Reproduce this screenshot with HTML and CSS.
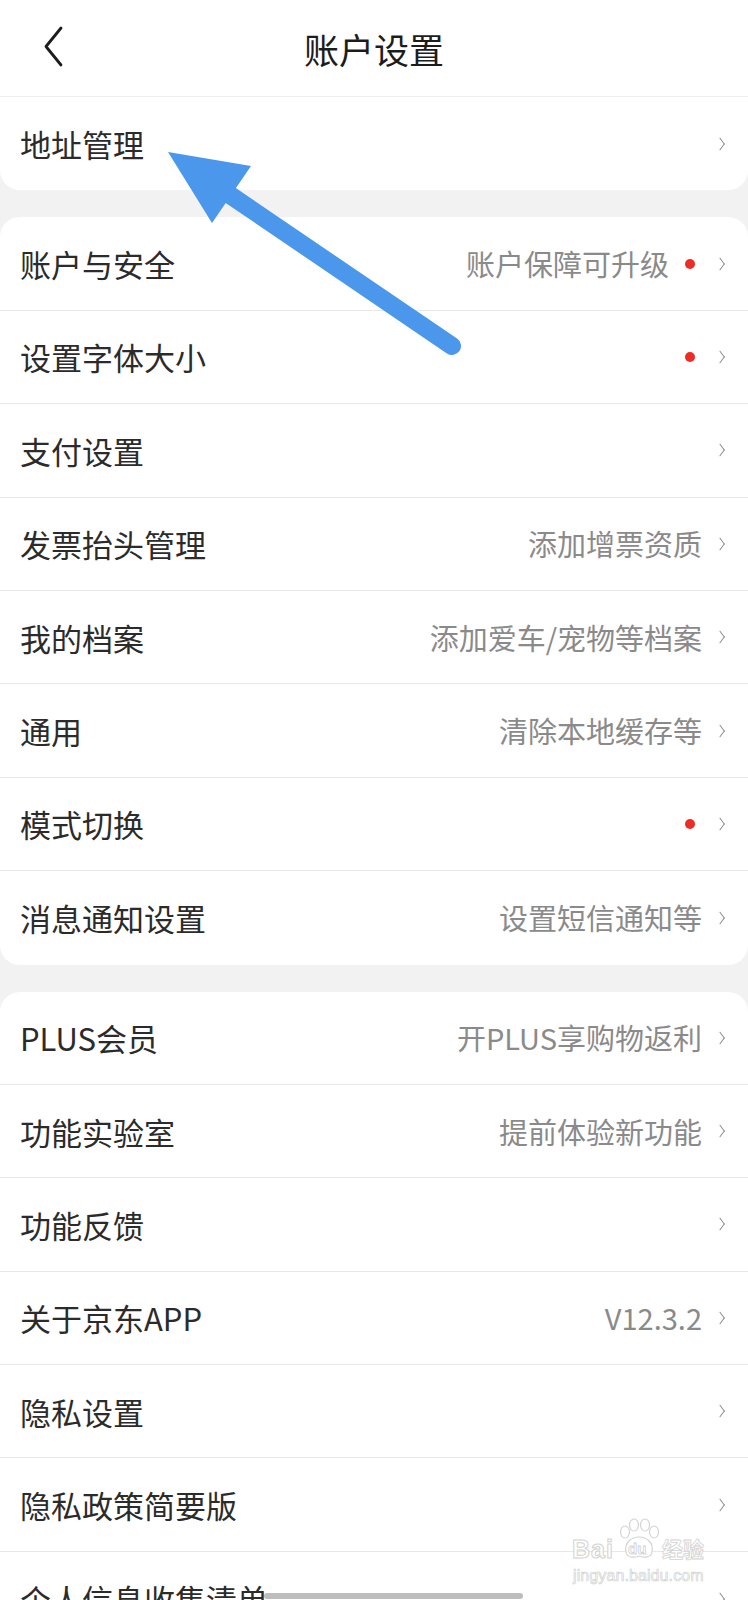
FILE: index.html
```html
<!DOCTYPE html>
<html lang="zh-CN">
<head>
    <meta charset="UTF-8">
    <meta name="viewport" content="width=device-width, initial-scale=1.0">
    <title>账户设置</title>
    <link rel="stylesheet" href="styles.css">
</head>
<body>
    <div class="page">
        <header class="topbar">
            <span class="back">
                <svg width="20" height="42" viewBox="0 0 20 42"><polyline points="17,2 2,20.5 17,39" fill="none" stroke="#1c1c1c" stroke-width="2.8" stroke-linecap="round" stroke-linejoin="round"/></svg>
            </span>
            <h1 class="title">账户设置</h1>
        </header>

        <section class="group group-first">
            <div class="row"><span class="label">地址管理</span><span class="extra"><i class="chev"></i></span></div>
        </section>

        <section class="group">
            <div class="row"><span class="label">账户与安全</span><span class="extra"><span class="value">账户保障可升级</span><i class="dot"></i><i class="chev"></i></span></div>
            <div class="row"><span class="label">设置字体大小</span><span class="extra"><i class="dot"></i><i class="chev"></i></span></div>
            <div class="row"><span class="label">支付设置</span><span class="extra"><i class="chev"></i></span></div>
            <div class="row"><span class="label">发票抬头管理</span><span class="extra"><span class="value">添加增票资质</span><i class="chev"></i></span></div>
            <div class="row"><span class="label">我的档案</span><span class="extra"><span class="value">添加爱车/宠物等档案</span><i class="chev"></i></span></div>
            <div class="row"><span class="label">通用</span><span class="extra"><span class="value">清除本地缓存等</span><i class="chev"></i></span></div>
            <div class="row"><span class="label">模式切换</span><span class="extra"><i class="dot"></i><i class="chev"></i></span></div>
            <div class="row"><span class="label">消息通知设置</span><span class="extra"><span class="value">设置短信通知等</span><i class="chev"></i></span></div>
        </section>

        <section class="group">
            <div class="row"><span class="label">PLUS会员</span><span class="extra"><span class="value">开PLUS享购物返利</span><i class="chev"></i></span></div>
            <div class="row"><span class="label">功能实验室</span><span class="extra"><span class="value">提前体验新功能</span><i class="chev"></i></span></div>
            <div class="row"><span class="label">功能反馈</span><span class="extra"><i class="chev"></i></span></div>
            <div class="row"><span class="label">关于京东APP</span><span class="extra"><span class="value">V12.3.2</span><i class="chev"></i></span></div>
            <div class="row"><span class="label">隐私设置</span><span class="extra"><i class="chev"></i></span></div>
            <div class="row"><span class="label">隐私政策简要版</span><span class="extra"><i class="chev"></i></span></div>
            <div class="row"><span class="label">个人信息收集清单</span><span class="extra"><i class="chev"></i></span></div>
        </section>

        <!-- annotation arrow drawn over the list -->
        <svg class="pointer" width="748" height="400" viewBox="0 0 748 400">
            <line x1="452" y1="346" x2="230" y2="195" stroke="#4a97ec" stroke-width="18" stroke-linecap="round"/>
            <polygon points="168,152 251,166 212,223" fill="#4a97ec"/>
        </svg>

        <div class="watermark">
            <svg class="paw" width="46" height="42" viewBox="0 0 46 42">
                <ellipse cx="9" cy="14" rx="4.5" ry="6" fill="none" stroke="#d4d4d4" stroke-width="1.2"/>
                <ellipse cx="18" cy="7" rx="4.5" ry="6" fill="none" stroke="#d4d4d4" stroke-width="1.2"/>
                <ellipse cx="29" cy="7" rx="4.5" ry="6" fill="none" stroke="#d4d4d4" stroke-width="1.2"/>
                <ellipse cx="38" cy="14" rx="4.5" ry="6" fill="none" stroke="#d4d4d4" stroke-width="1.2"/>
                <path d="M10,34 C8,24 16,19 23,19 C30,19 38,24 36,34 C35,40 28,40 23,38 C18,40 11,40 10,34 Z" fill="#fff" stroke="#d4d4d4" stroke-width="1.2"/>
            </svg>
            <span class="wm-bai">Bai</span>
            <span class="wm-du">du</span>
            <span class="wm-jy">经验</span>
            <span class="wm-url">jingyan.baidu.com</span>
        </div>

        <div class="scrollbar"></div>
    </div>
</body>
</html>
```

FILE: styles.css
```css
html, body { margin: 0; padding: 0; }
body { font-family: "Noto Sans CJK SC", "Noto Sans", sans-serif; background-color: #f2f2f2; color: #333; }
.page { position: relative; width: 748px; height: 1600px; overflow: hidden; }

.topbar { height: 97px; background-color: #fff; border-bottom: 1px solid #efefef; box-sizing: border-box; display: flex; align-items: center; justify-content: center; position: relative; }
.back { position: absolute; left: 44px; top: 26px; width: 20px; height: 42px; }
.back svg { display: block; }
.title { margin: 0; font-size: 35px; font-weight: 400; color: #1c1c1c; line-height: 1; }

.group { background-color: #fff; border-radius: 20px; margin-top: 27px; overflow: hidden; }
.group-first { margin-top: 0; border-radius: 0 0 20px 20px; }

.row { height: 93.4px; box-sizing: border-box; padding: 0 23px 0 20px; display: flex; align-items: center; justify-content: space-between; border-bottom: 1px solid #e8e8e8; }
.row:last-child { border-bottom: none; }
.label { font-size: 31px; line-height: 1; color: #2b2b2b; }

.extra { display: flex; align-items: center; }
.value { font-size: 29px; line-height: 1; color: #8a8a8a; }
.dot { display: block; width: 10px; height: 10px; border-radius: 50%; background-color: #ee2b25; margin-left: 16px; margin-right: 7px; }
.chev { display: block; width: 6px; height: 12px; margin-left: 17px; background: none; position: relative; }
.chev::before { content: ""; position: absolute; left: -3px; top: 2px; width: 7px; height: 7px; border-top: 1.6px solid #8c8c8c; border-right: 1.6px solid #8c8c8c; transform: rotate(45deg) skew(8deg, 8deg); }

.pointer { position: absolute; left: 0; top: 0; pointer-events: none; }

.watermark { position: absolute; left: 572px; top: 1516px; width: 140px; height: 70px; pointer-events: none; font-family: "Liberation Sans", Arial, sans-serif; }
.paw { position: absolute; left: 44px; top: 2px; }
.wm-bai { position: absolute; left: 0; top: 19px; font-size: 25px; font-weight: 700; color: #fff; -webkit-text-stroke: 1px #d2d2d2; letter-spacing: 1px; }
.wm-du { position: absolute; left: 56px; top: 24px; font-size: 15px; font-weight: 700; color: #fff; -webkit-text-stroke: 0.8px #d2d2d2; }
.wm-jy { position: absolute; left: 90px; top: 22px; font-size: 21px; font-family: "Noto Sans CJK SC", sans-serif; font-weight: 700; color: #fff; -webkit-text-stroke: 0.8px #d2d2d2; line-height: 1; }
.wm-url { position: absolute; left: 1px; top: 51px; font-size: 16px; color: #fff; -webkit-text-stroke: 0.7px #d2d2d2; letter-spacing: 0.1px; }

.scrollbar { position: absolute; left: 264px; top: 1593px; width: 259px; height: 6px; border-radius: 3px; background-color: #bdbdbd; }
```
